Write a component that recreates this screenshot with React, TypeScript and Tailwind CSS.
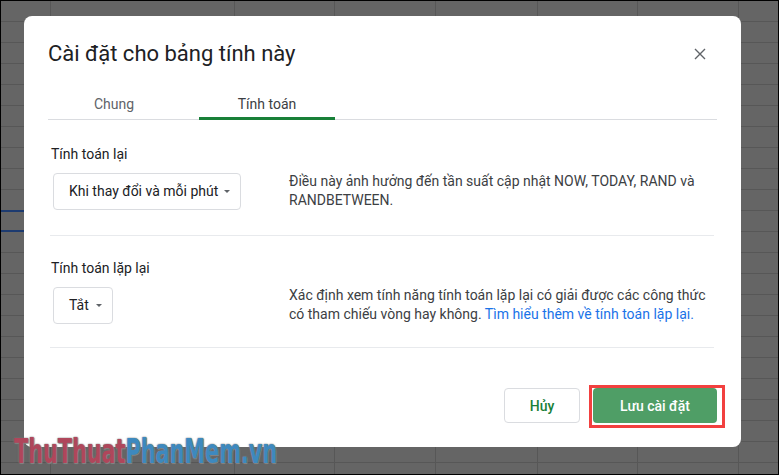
import React from 'react'

const body = "font-['Roboto','Liberation_Sans',sans-serif]"

function Dropdown({ label, width }: { label: string; width: string }) {
  return (
    <div
      className={`${width} h-[37px] shrink-0 flex items-center justify-between pl-[15px] pr-[10px] border border-[#dadce0] rounded text-sm text-[#202124]`}
    >
      <span className="whitespace-nowrap">{label}</span>
      <svg width="6" height="3" viewBox="0 0 6 3" className="shrink-0">
        <path d="M0 0h6L3 3z" fill="#5f6368" />
      </svg>
    </div>
  )
}

function Section({
  label,
  dropWidth,
  dropLabel,
  children,
  className,
}: {
  label: string
  dropWidth: string
  dropLabel: string
  children: React.ReactNode
  className: string
}) {
  return (
    <div className={`ml-[2px] mr-[3px] border-b border-[#e8eaed] ${className}`}>
      <div className="pl-px h-5 leading-5 text-sm text-[#202124]">{label}</div>
      <div className="mt-2 flex items-center">
        <div className="w-[239px] shrink-0 pl-[3px]">
          <Dropdown label={dropLabel} width={dropWidth} />
        </div>
        <p className="flex-1 text-sm leading-[19px] text-[#3c4043]">{children}</p>
      </div>
    </div>
  )
}

function SheetBackground() {
  const cols = ['w-[50px]', 'w-[184px]', 'w-[100px]', 'w-[101px]', 'w-[102px]', 'w-[100px]', 'w-[101px]']
  return (
    <div className="absolute inset-0 flex bg-[#656565] bg-[repeating-linear-gradient(to_bottom,transparent_0px,transparent_20px,#575757_20px,#575757_21px)]">
      {cols.map((w, i) => (
        <div key={i} className={`${w} h-full border-r border-[#575757]`} />
      ))}
      <div className="flex-1" />
    </div>
  )
}

export default function App() {
  return (
    <div className={`relative w-[779px] h-[475px] overflow-hidden border border-black ${body}`}>
      <SheetBackground />
      <div className="absolute left-0 top-[209px] w-[60px] h-[22px] border-y-2 border-[#1d3b70]" />

      {/* dialog */}
      <div className="absolute left-[23px] top-[15px] w-[717px] h-[431px] bg-white rounded-lg px-6 pt-6 pb-6 flex flex-col">
        <div className="flex items-center justify-between">
          <h1 className="text-[22px] leading-7 text-[#202124]">Cài đặt cho bảng tính này</h1>
          <button type="button" className="w-6 h-6 mr-[5px] flex items-center justify-center">
            <svg width="12" height="12" viewBox="0 0 12 12">
              <path d="M1 1l10 10M11 1L1 11" stroke="#5f6368" strokeWidth="1.4" />
            </svg>
          </button>
        </div>

        <div className="mt-5 flex border-b border-[#dadce0] text-sm">
          <div className="w-[151px] h-[31px] flex items-center pl-[46px] text-[#5f6368]">Chung</div>
          <div className="relative w-[136px] h-[31px] flex items-center justify-center text-[#3c4043]">
            Tính toán
            <span className="absolute left-0 right-0 -bottom-px h-[3px] bg-[#188038]" />
          </div>
        </div>

        <Section
          label="Tính toán lại"
          dropLabel="Khi thay đổi và mỗi phút"
          dropWidth="w-[188px]"
          className="pt-6 pb-[25px]"
        >
          Điều này ảnh hưởng đến tần suất cập nhật NOW, TODAY, RAND và
          <br />
          RANDBETWEEN.
        </Section>

        <Section
          label="Tính toán lặp lại"
          dropLabel="Tắt"
          dropWidth="w-[60px]"
          className="pt-[22px] pb-[23px]"
        >
          Xác định xem tính năng tính toán lặp lại có giải được các công thức
          <br />
          có tham chiếu vòng hay không.{' '}
          <span className="text-[#1a73e8]">Tìm hiểu thêm về tính toán lặp lại.</span>
        </Section>

        <div className="mt-auto flex justify-end gap-[13px]">
          <button
            type="button"
            className="w-[76px] h-[35px] border border-[#dadce0] rounded text-sm font-medium text-[#188038]"
          >
            Hủy
          </button>
          <div className="relative">
            <button
              type="button"
              className="w-[124px] h-[35px] rounded bg-[#4f9e66] text-sm font-medium text-white"
            >
              Lưu cài đặt
            </button>
            <span className="absolute -left-1 -right-2 -top-[3px] -bottom-[5px] border-[3px] border-[#f2403f]" />
          </div>
        </div>
      </div>

      {/* watermark */}
      <div className="absolute left-[13px] top-[434px] origin-left scale-x-[0.7] text-[33px] leading-none font-bold font-['DejaVu_Sans_Condensed','DejaVu_Sans',sans-serif] [text-shadow:0_0_2px_#7a7a7a,0_0_1px_#7a7a7a,1px_1px_1px_#8a8a8a] whitespace-nowrap">
        <span className="text-[#c8304e]/70">ThuThuat</span>
        <span className="text-[#2a8fd6]/75">PhanMem.vn</span>
      </div>
    </div>
  )
}
